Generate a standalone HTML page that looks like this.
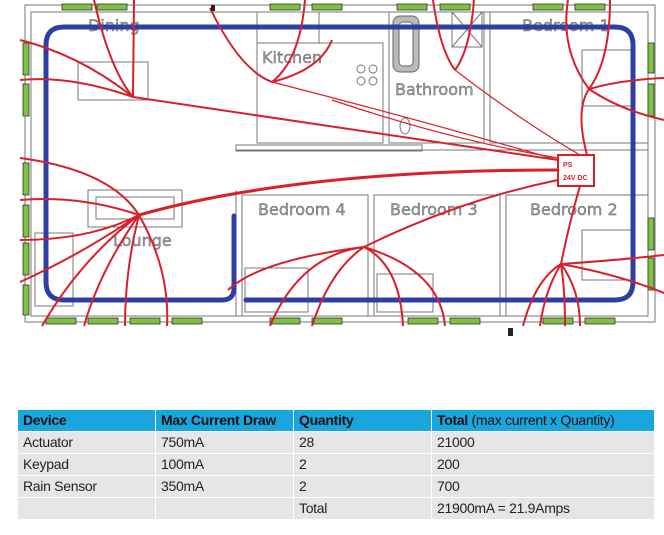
<!DOCTYPE html>
<html><head><meta charset="utf-8"><style>
body{margin:0;width:664px;height:535px;background:#fff;overflow:hidden;position:relative;font-family:"Liberation Sans Narrow","Liberation Sans",sans-serif}
svg{position:absolute;left:0;top:0}
table{position:absolute;left:17px;top:409px;border-collapse:collapse;width:638px;font-size:14px;letter-spacing:-0.3px;color:#222}
td{height:21px;padding:0 0 0 5px;background:#e6e6e6;border:1px solid #fff;line-height:21px;white-space:nowrap}
tr.h td{background:#18a6df;font-weight:bold;color:#111}
</style></head><body>
<svg width="664" height="340" viewBox="0 0 664 340">
<g fill="none" stroke="#777" stroke-width="1">
<rect x="25" y="5" width="630" height="317"/>
<rect x="31" y="12" width="617" height="304"/>
<rect x="78" y="62" width="70" height="38"/>
<rect x="257" y="12" width="62" height="31"/>
<rect x="257" y="43" width="126" height="100"/>
<rect x="389" y="12" width="95" height="131"/>
<rect x="490" y="12" width="158" height="131"/>
<rect x="582" y="50" width="50" height="56"/>
<rect x="236" y="145" width="186" height="6"/>
<line x1="236" y1="150" x2="648" y2="150"/>
<line x1="236" y1="190" x2="236" y2="316"/>
<rect x="242" y="195" width="126" height="121"/>
<rect x="374" y="195" width="126" height="121"/>
<rect x="506" y="195" width="142" height="121"/>
<rect x="88" y="190" width="94" height="37"/>
<rect x="96" y="197" width="78" height="22"/>
<rect x="35" y="233" width="38" height="73"/>
<rect x="245" y="268" width="63" height="44"/>
<rect x="377" y="274" width="56" height="38"/>
<rect x="582" y="230" width="50" height="50"/>
<rect x="452" y="12" width="30" height="35"/>
<line x1="452" y1="12" x2="482" y2="47"/><line x1="482" y1="12" x2="452" y2="47"/>
<circle cx="361" cy="69" r="4"/><circle cx="373" cy="69" r="4"/><circle cx="361" cy="81" r="4"/><circle cx="373" cy="81" r="4"/>
<ellipse cx="405" cy="126" rx="5" ry="8"/>
</g>
<rect x="393" y="16" width="26" height="56" rx="7" fill="#bbb" stroke="#666"/>
<rect x="399" y="22" width="14" height="44" rx="4" fill="#fff" stroke="#666"/>
<g fill="#7fc242" stroke="#333" stroke-width="0.8">
<rect x="62" y="4" width="30" height="6"/><rect x="97" y="4" width="30" height="6"/>
<rect x="270" y="4" width="30" height="6"/><rect x="312" y="4" width="30" height="6"/>
<rect x="397" y="4" width="30" height="6"/><rect x="440" y="4" width="30" height="6"/>
<rect x="533" y="4" width="30" height="6"/><rect x="575" y="4" width="30" height="6"/>
<rect x="46" y="318" width="30" height="6"/><rect x="88" y="318" width="30" height="6"/>
<rect x="130" y="318" width="30" height="6"/><rect x="172" y="318" width="30" height="6"/>
<rect x="270" y="318" width="30" height="6"/><rect x="312" y="318" width="30" height="6"/>
<rect x="408" y="318" width="30" height="6"/><rect x="450" y="318" width="30" height="6"/>
<rect x="543" y="318" width="30" height="6"/><rect x="585" y="318" width="30" height="6"/>
<rect x="23" y="43" width="6" height="32"/><rect x="23" y="84" width="6" height="32"/>
<rect x="23" y="163" width="6" height="32"/><rect x="23" y="205" width="6" height="32"/>
<rect x="23" y="243" width="6" height="32"/><rect x="23" y="285" width="6" height="30"/>
<rect x="648" y="43" width="6" height="30"/><rect x="648" y="84" width="6" height="32"/>
<rect x="648" y="218" width="6" height="32"/><rect x="648" y="258" width="6" height="32"/>
</g>
<g font-family="DejaVu Sans,sans-serif" font-size="16" fill="#999" stroke="#666" stroke-width="0.4">
<text x="88" y="31">Dining</text><text x="262" y="63">Kitchen</text>
<text x="395" y="95">Bathroom</text><text x="522" y="31">Bedroom 1</text>
<text x="258" y="215">Bedroom 4</text><text x="390" y="215">Bedroom 3</text>
<text x="530" y="215">Bedroom 2</text><text x="113" y="246">Lounge</text>
</g>
<g fill="none" stroke="#2e3fa3" stroke-width="5" stroke-linecap="round">
<path d="M234 216 V288 Q234 300 222 300 H64 Q46 300 46 282 V45 Q46 27 64 27 H615 Q633 27 633 45 V282 Q633 300 615 300 H246"/>
</g>
<g fill="none" stroke="#d9202a" stroke-width="2">
<path d="M133 97 Q110 70 94 0"/><path d="M133 97 L134 0"/>
<path d="M133 97 Q80 55 20 40"/><path d="M133 97 Q70 75 20 80"/>
<path d="M133 97 Q360 130 558 160"/>
<path d="M272 82 Q240 70 210 8"/><path d="M272 82 Q300 60 305 0"/><path d="M272 82 Q320 70 332 40"/>
<path d="M272 82 Q420 120 558 160" stroke-width="1.2"/>
<path d="M332 100 Q450 140 558 158" stroke-width="1.2"/>
<path d="M455 70 Q440 50 433 0"/><path d="M455 70 Q470 50 474 0"/>
<path d="M455 70 Q520 120 580 155" stroke-width="1.2"/>
<path d="M139 215 Q300 170 558 170" stroke-width="3"/>
<path d="M139 215 Q110 170 20 158"/><path d="M139 215 Q80 195 20 200"/>
<path d="M139 215 Q90 240 20 240"/><path d="M139 215 Q80 255 20 282"/>
<path d="M139 215 Q80 260 42 326"/><path d="M139 215 Q100 270 84 326"/>
<path d="M139 215 Q125 270 125 326"/><path d="M139 215 Q170 270 167 326"/>
<path d="M589 89 Q560 50 568 0"/><path d="M589 89 Q610 60 610 0"/>
<path d="M589 89 Q620 80 664 78"/><path d="M589 89 Q620 110 664 120"/>
<path d="M589 89 Q575 110 587 155"/>
<path d="M364 247 Q460 200 558 180"/>
<path d="M364 247 Q300 255 270 326"/><path d="M364 247 Q330 270 312 326"/>
<path d="M364 247 Q260 260 228 290"/>
<path d="M364 247 Q400 265 403 326"/><path d="M364 247 Q440 270 445 326"/>
<path d="M561 264 Q570 220 580 186"/>
<path d="M561 264 Q535 280 523 326"/><path d="M561 264 Q545 290 540 326"/>
<path d="M561 264 Q565 290 565 326"/><path d="M561 264 Q580 290 580 326"/>
<path d="M561 264 Q620 260 664 255"/><path d="M561 264 Q620 275 664 293"/>
</g>
<rect x="558" y="155" width="36" height="31" fill="#fff" stroke="#d9202a" stroke-width="2"/>
<text x="563" y="167" font-family="Liberation Sans,sans-serif" font-size="7" font-weight="bold" fill="#d9202a">PS</text>
<text x="563" y="180" font-family="Liberation Sans,sans-serif" font-size="7" font-weight="bold" fill="#d9202a">24V DC</text>
<rect x="508" y="328" width="5" height="8" fill="#222"/>
<rect x="211" y="5" width="4" height="6" fill="#222"/>
</svg>
<table>
<tr class="h"><td style="width:132px">Device</td><td style="width:132px">Max Current Draw</td><td style="width:132px">Quantity</td><td>Total <span style="font-weight:normal">(max current x Quantity)</span></td></tr>
<tr><td>Actuator</td><td>750mA</td><td>28</td><td>21000</td></tr>
<tr><td>Keypad</td><td>100mA</td><td>2</td><td>200</td></tr>
<tr><td>Rain Sensor</td><td>350mA</td><td>2</td><td>700</td></tr>
<tr><td></td><td></td><td>Total</td><td>21900mA = 21.9Amps</td></tr>
</table>
</body></html>
